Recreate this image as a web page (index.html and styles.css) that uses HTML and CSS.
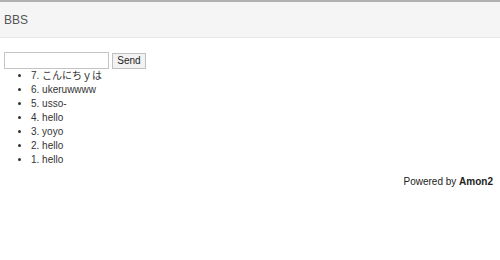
FILE: index.html
```html
<!DOCTYPE html>
<html lang="en">
<head>
    <meta charset="UTF-8">
    <title>BBS</title>
    <link rel="stylesheet" href="styles.css">
</head>
<body>
    <div class="navbar">
        <div class="brand">BBS</div>
    </div>

    <div class="container">
        <form class="post-form">
            <input type="text" class="post-input" name="body">
            <button type="submit" class="send-button">Send</button>
        </form>
        <ul class="entries">
            <li>7. こんにちｙは</li>
            <li>6. ukeruwwww</li>
            <li>5. usso-</li>
            <li>4. hello</li>
            <li>3. yoyo</li>
            <li>2. hello</li>
            <li>1. hello</li>
        </ul>
        <footer class="footer">Powered by <strong>Amon2</strong></footer>
    </div>
</body>
</html>
```

FILE: styles.css
```css
body {
    margin: 0;
    background: #fff;
    color: #333;
    font-family: 'Liberation Sans', Arial, 'Noto Sans CJK JP', sans-serif;
    font-size: 10px;
    line-height: 14px;
}

.navbar {
    border-top: 2px solid #b0b0b0;
    border-bottom: 1px solid #e8e8e8;
    background: #f5f5f5;
    height: 35px;
    display: flex;
    align-items: center;
    padding: 0 4px;
}

.brand {
    font-size: 12px;
    color: #555;
}

.container {
    padding: 14px 4px 0 4px;
}

.post-form {
    display: flex;
    align-items: center;
    gap: 3px;
}

.post-input {
    box-sizing: border-box;
    width: 105px;
    height: 17px;
    margin: 0;
    padding: 1px 2px;
    border: 1px solid #c4c4c4;
    font-size: 10px;
}

.send-button {
    box-sizing: border-box;
    width: 34px;
    height: 16px;
    margin: 0;
    padding: 0;
    border: 1px solid #c0c0c0;
    background: #f2f2f2;
    font-family: inherit;
    font-size: 10px;
    color: #222;
}

.entries {
    margin: 0;
    padding-left: 27px;
}

.footer {
    text-align: right;
    padding: 8px 3px 0 0;
    color: #222;
}
```
